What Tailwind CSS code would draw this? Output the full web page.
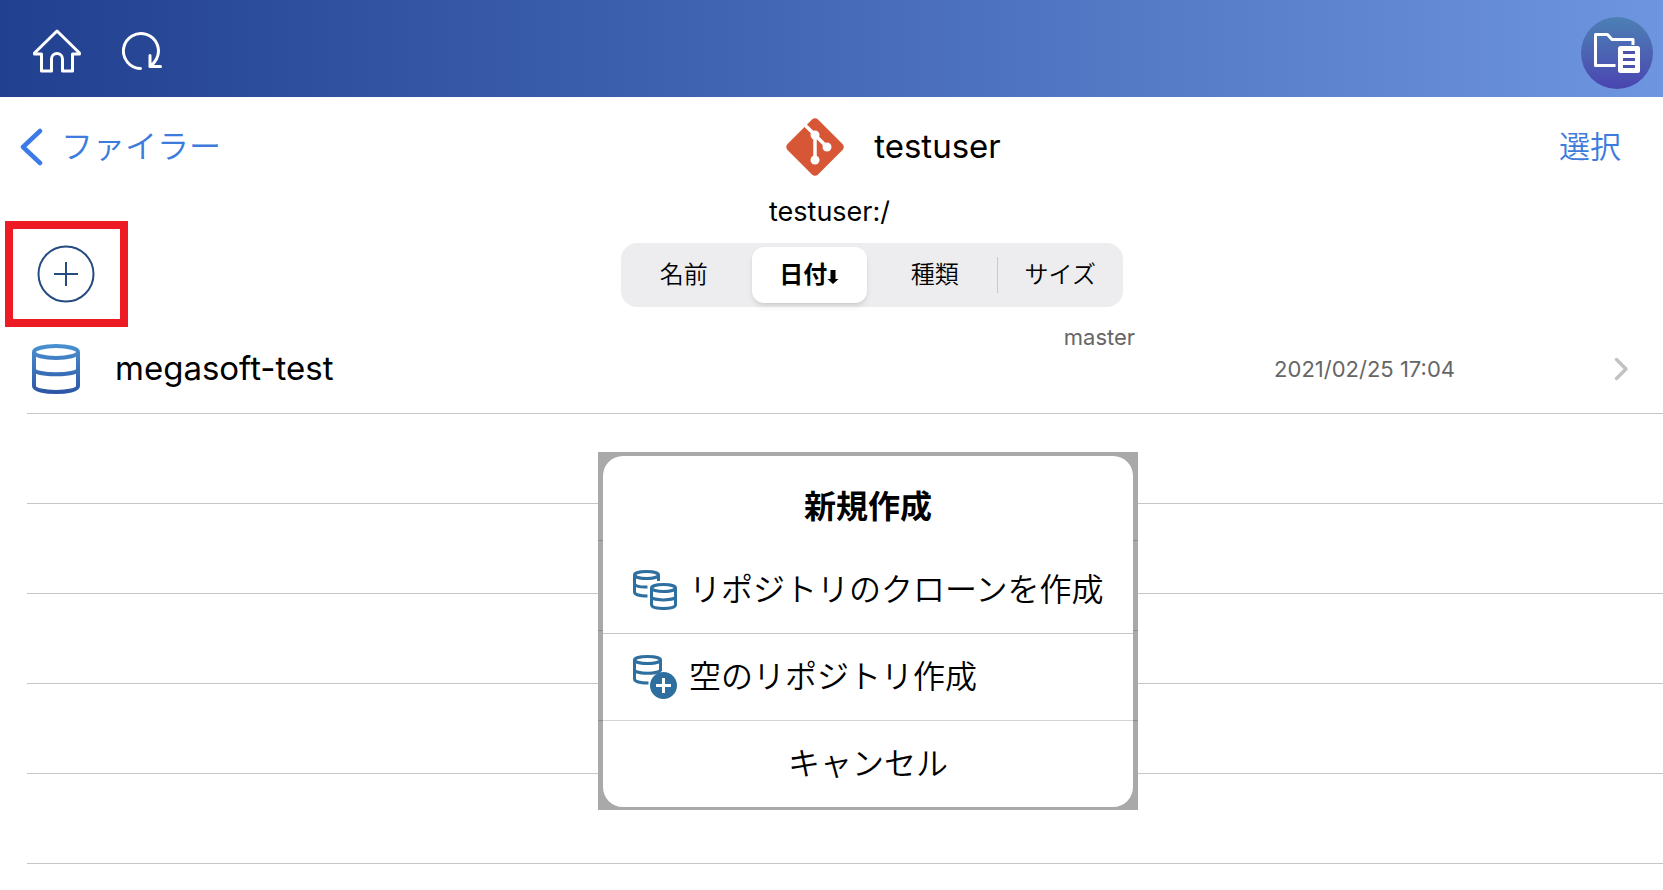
<!DOCTYPE html>
<html lang="ja">
<head>
<meta charset="utf-8">
<meta name="viewport" content="width=device-width, initial-scale=1">
<title>testuser</title>
<script src="https://cdn.jsdelivr.net/npm/@tailwindcss/browser@4"></script>
</head>
<body class="relative min-h-screen overflow-x-hidden bg-white text-black font-['Inter','Noto_Sans_CJK_JP',sans-serif]">
<header class="flex h-[97px] items-center bg-linear-to-r from-[#21408f] to-[#6e95e0] pl-[32px] pr-[10px] pt-1">
  <button aria-label="ホーム" class="mr-[40px]">
    <svg class="block" width="50" height="46" viewBox="0 0 50 46" fill="none" stroke="#fff" stroke-width="3" stroke-linejoin="round"><path d="M25 3 2.500 25v1H9.500V43H19.500V31a5.500 5.500 0 0 1 11 0V43H40.500V26H47.500V25Z"/></svg>
  </button>
  <button aria-label="再読み込み">
    <svg class="block" width="42" height="40" viewBox="0 0 42 40" fill="none" stroke="#fff" stroke-width="3" stroke-linecap="round" stroke-linejoin="round"><path d="M18.500 37.500A17.500 17.500 0 1 1 34.500 28Q32.500 32 28 35.500M28 24.500V35.500H38.500"/></svg>
  </button>
  <button aria-label="ファイル" class="ml-auto mt-1 flex size-[72px] items-center justify-center rounded-full bg-linear-to-b from-[#4c80b4] to-[#4a44b0]">
    <svg width="48" height="42" viewBox="0 0 48 42" fill="none"><path d="M22.500 33.500H2.500V2.500H14.500L19 7.500H40V13" stroke="#fff" stroke-width="3" stroke-linejoin="round"/><rect x="25" y="14" width="22" height="27" rx="2.500" fill="#fff"/><path d="M30 20.500H42M30 27.500H42M30 34.500H42" stroke="#4a52ae" stroke-width="3"/></svg>
  </button>
</header>

<nav class="grid h-[100px] grid-cols-[1fr_auto_1fr] items-center pl-[20px] pr-[42px] text-[#3d7bdc]">
  <a href="#" class="flex items-center gap-[18px] text-[32px] font-[350]">
    <svg width="23" height="38" viewBox="0 0 23 38" fill="none" stroke="#3b7be8" stroke-width="4.500" stroke-linecap="round" stroke-linejoin="round"><path d="M20 3 3 19 20 35"/></svg>
    ファイラー
  </a>
  <h1 class="ml-[146px] flex items-center gap-[30px] text-[33px] text-black">
    <svg width="58" height="58" viewBox="0 0 58 58"><path d="M26 1.500 1.500 26Q-1 29 1.500 32L26 56.500Q29 59 32 56.500L56.500 32Q59 29 56.500 26L32 1.500Q29-1 26 1.500Z" fill="#d65635"/><g stroke="#fff" stroke-width="3.500" fill="none"><path d="M18.500 6.500 41 29M29 17V41"/></g><g fill="#fff"><circle cx="29" cy="17" r="4.500"/><circle cx="41" cy="29" r="4.500"/><circle cx="29" cy="42" r="4.500"/></g></svg>
    testuser
  </h1>
  <button class="justify-self-end text-[31px] font-[350]">選択</button>
</nav>

<p class="h-[24px] pr-1 text-center text-[27px] leading-[30px]">testuser:/</p>

<div class="grid h-[106px] grid-cols-[123px_1fr] pl-[5px]">
  <div class="flex items-center justify-center border-8 border-[#ed1c24] pr-[2px]">
    <button aria-label="新規作成">
      <svg class="block" width="58" height="58" viewBox="0 0 58 58" fill="none" stroke="#254b80" stroke-width="2"><circle cx="29" cy="29" r="27.500"/><path d="M29 17V41M17 29H41"/></svg>
    </button>
  </div>
  <div class="mr-[47px] mt-[22px] grid h-[64px] w-[502px] grid-cols-4 justify-self-center rounded-2xl bg-[#ededef] py-1 text-[24px] font-[350]">
    <button>名前</button>
    <button class="mx-[5px] flex items-center justify-center rounded-xl bg-white font-bold shadow-md">日付<svg class="mt-1" width="12" height="16" viewBox="0 0 12 16"><path d="M3.500 1H8.500V10H11.500L6 15 .5 10H3.500Z"/></svg></button>
    <button class="relative">種類<span class="absolute right-0 top-[10px] h-[36px] w-px bg-[#c9c9cc]"></span></button>
    <button>サイズ</button>
  </div>
</div>

<ul class="ml-[27px]">
  <li class="h-[87px] border-b border-[#c6c6c8]">
    <a href="#" class="flex h-full items-center pb-[2px] pl-[4px] pr-[34px]">
      <svg class="mr-[34px]" width="50" height="52" viewBox="0 0 50 52" fill="none" stroke="url(#db)" stroke-width="4"><defs><linearGradient id="db" x1="0" y1="0" x2="0" y2="52" gradientUnits="userSpaceOnUse"><stop stop-color="#4a93d2"/><stop offset="1" stop-color="#2c54a4"/></linearGradient></defs><ellipse cx="25" cy="9" rx="22" ry="6"/><path d="M3 9V43C3 51 47 51 47 43V9M3 26C3 33 47 33 47 26"/></svg>
      <span class="flex-1 text-[33px]">megasoft-test</span>
      <span class="mr-[139px] -mt-[64px] text-[22px] text-[#666]">master</span>
      <time class="mr-[159px] text-[22px] text-[#666]">2021/02/25 17:04</time>
      <svg width="15" height="24" viewBox="0 0 15 24" fill="none" stroke="#c2c2c4" stroke-width="3.500" stroke-linecap="round" stroke-linejoin="round"><path d="M2.500 2.500 12 12 2.500 21.500"/></svg>
    </a>
  </li>
  <li class="h-[90px] border-b border-[#c6c6c8]"></li>
  <li class="h-[90px] border-b border-[#c6c6c8]"></li>
  <li class="h-[90px] border-b border-[#c6c6c8]"></li>
  <li class="h-[90px] border-b border-[#c6c6c8]"></li>
  <li class="h-[90px] border-b border-[#c6c6c8]"></li>
</ul>

<div role="dialog" aria-labelledby="dlg-title" class="absolute left-[598px] top-[452px] w-[540px] bg-[#a9a9a9] bg-[repeating-linear-gradient(to_bottom,transparent_0_88px,#8c8c8c_88px_89px,transparent_89px_90px)] px-[5px] pb-[3px] pt-1">
  <div class="overflow-hidden rounded-[20px] bg-white text-[32px] font-[350]">
    <h2 id="dlg-title" class="flex h-[90px] items-center justify-center pt-3 font-bold">新規作成</h2>
    <button class="flex h-[88px] w-full items-center gap-[12px] whitespace-nowrap border-b border-[#c6c6c8] pl-[30px]">
      <svg class="shrink-0" width="44" height="40" viewBox="0 0 44 40" fill="none" stroke="#2f6f9f" stroke-width="3"><ellipse cx="13.500" cy="5" rx="12" ry="3.500"/><path d="M1.500 5V22C1.500 24.500 7 26 14.500 26M1.500 13.500C1.500 16 7 17.500 14.500 17M25.500 5V11"/><ellipse cx="30.500" cy="18" rx="12" ry="3.500"/><path d="M18.500 18V35C18.500 39.700 42.500 39.700 42.500 35V18M18.500 26.500C18.500 31 42.500 31 42.500 26.500"/></svg>
      リポジトリのクローンを作成
    </button>
    <button class="flex h-[87px] w-full items-center gap-[12px] border-b border-[#d4d4d6] pl-[30px]">
      <svg class="shrink-0" width="44" height="44" viewBox="0 0 44 44" fill="none"><g stroke="#2f6f9f" stroke-width="3"><ellipse cx="14.500" cy="5" rx="13" ry="3.500"/><path d="M1.500 5V24C1.500 26.500 7 28 15.500 28M1.500 14.500C1.500 19.500 27.500 19.500 27.500 14.500M27.500 5V16"/></g><circle cx="30.500" cy="30.500" r="13.500" fill="#2f6f9f"/><path d="M30.500 23V38M23 30.500H38" stroke="#fff" stroke-width="3"/></svg>
      空のリポジトリ作成
    </button>
    <button class="flex h-[86px] w-full items-center justify-center">キャンセル</button>
  </div>
</div>
</body>
</html>
